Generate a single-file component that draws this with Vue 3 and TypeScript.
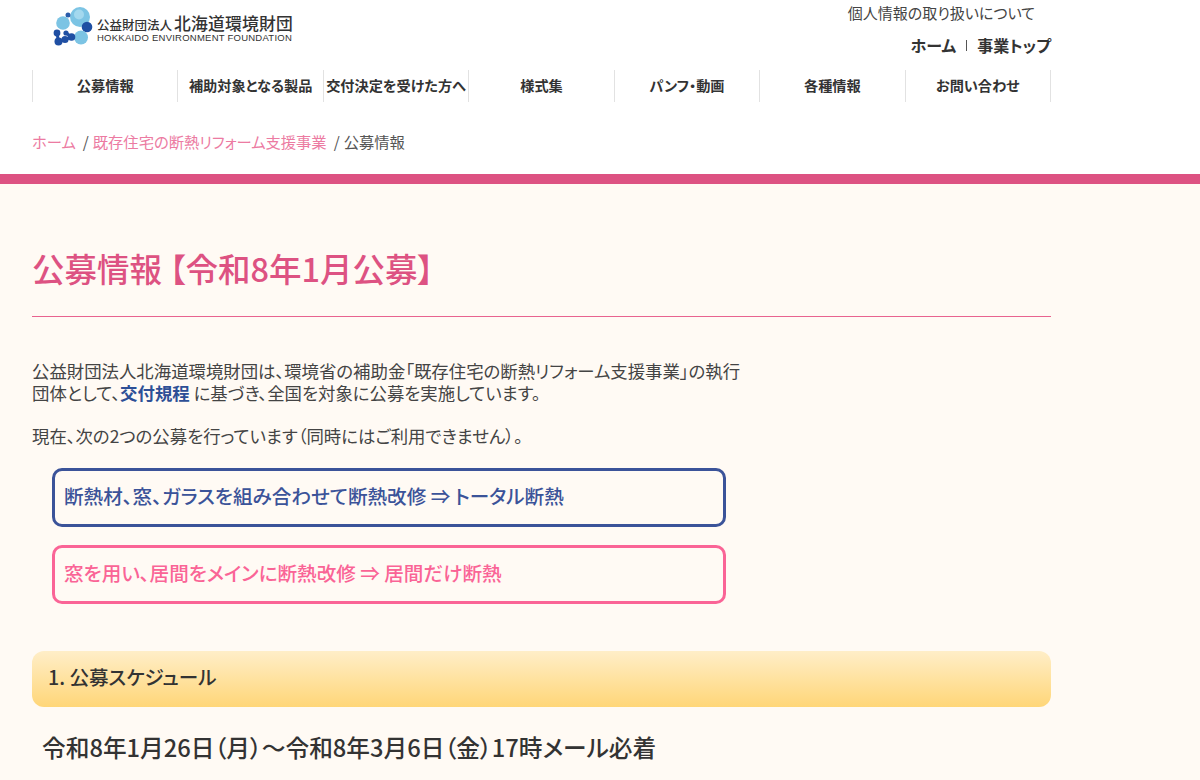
<script setup lang="ts">
const navItems = ["公募情報", "補助対象となる製品", "交付決定を受けた方へ", "様式集", "パンフ・動画", "各種情報", "お問い合わせ"];
</script>

<template>
  <div class="page">
    <header class="header">
      <div class="top">
        <a class="logo">
          <svg class="logo-mark" width="40" height="40" viewBox="0 0 40 40">
            <path d="M4 26 L5.5 34.5 L12 32.5 L18.5 30 L13 26" fill="none" stroke="#1f4fa3" stroke-width="3" />
            <circle cx="27" cy="10" r="10" fill="#7cc4e4" />
            <circle cx="26" cy="7.5" r="5" fill="#a3d8ee" />
            <circle cx="15" cy="8" r="2.5" fill="#2a5caa" />
            <circle cx="10" cy="16" r="6.8" fill="#7cc4e4" />
            <circle cx="34" cy="20" r="5.3" fill="#1f4fa3" />
            <circle cx="28" cy="30.5" r="7" fill="#7cc4e4" />
            <circle cx="4" cy="26" r="3.4" fill="#1f4fa3" />
            <circle cx="5.5" cy="34.5" r="4" fill="#1f4fa3" />
            <circle cx="12" cy="32.5" r="3.6" fill="#1f4fa3" />
            <circle cx="18.5" cy="30" r="3.8" fill="#1f4fa3" />
            <circle cx="13" cy="26" r="2.6" fill="#1f4fa3" />
          </svg>
          <div class="logo-text">
            <div class="logo-ja"><span class="logo-small">公益財団法人</span><span class="logo-big">北海道環境財団</span></div>
            <div class="logo-en">HOKKAIDO ENVIRONMENT FOUNDATION</div>
          </div>
        </a>
        <div class="top-links">
          <a class="privacy">個人情報の取り扱いについて</a>
          <div class="sub-links"><a>ホーム</a><i></i><a>事業トップ</a></div>
        </div>
      </div>
      <nav class="nav">
        <a v-for="item in navItems" :key="item">{{ item }}</a>
      </nav>
      <div class="crumbs">
        <a>ホーム</a><span class="sep">/</span><a>既存住宅の断熱リフォーム支援事業</a><span class="sep">/</span><span>公募情報</span>
      </div>
    </header>

    <main class="main">
      <h1>公募情報 【令和8年1月公募】</h1>
      <div class="lead">
        <p>公益財団法人北海道環境財団は、環境省の補助金「既存住宅の断熱リフォーム支援事業」の執行<br />団体として、<a class="rule-link">交付規程</a> に基づき、全国を対象に公募を実施しています。</p>
        <p>現在、次の2つの公募を行っています（同時にはご利用できません）。</p>
      </div>
      <div class="choices">
        <a class="choice blue">断熱材、窓、ガラスを組み合わせて断熱改修 ⇒ トータル断熱</a>
        <a class="choice pink">窓を用い、居間をメインに断熱改修 ⇒ 居間だけ断熱</a>
      </div>
      <h2>1. 公募スケジュール</h2>
      <p class="period">令和8年1月26日（月）～令和8年3月6日（金）17時メール必着</p>
    </main>
  </div>
</template>

<style>
html, body { margin: 0; background: #fff; }
</style>

<style scoped>
.page {
  height: 780px;
  overflow: hidden;
  font-family: "Noto Sans CJK JP", "Noto Sans", sans-serif;
  font-feature-settings: "palt";
  color: #333;
}
.header { padding: 0 149px 0 32px; height: 174px; border-bottom: 10px solid #dd5282; }
.top { display: flex; justify-content: space-between; height: 70px; }
.logo { display: flex; align-items: flex-start; gap: 4px; padding: 7px 0 0 21px; }
.logo-text { padding-top: 6px; color: #333; }
.logo-ja { display: flex; align-items: baseline; height: 20px; white-space: nowrap; }
.logo-small { font-size: 12.5px; line-height: 20px; font-weight: 500; }
.logo-big { font-size: 16.8px; line-height: 20px; font-weight: 500; margin-left: 2px; letter-spacing: 0.2px; }
.logo-en { font-family: "Liberation Sans", sans-serif; font-size: 9.5px; line-height: 9px; letter-spacing: 0.24px; white-space: nowrap; }
.top-links { display: flex; flex-direction: column; align-items: flex-end; }
.privacy { font-size: 15px; line-height: 20px; margin: 3px 16px 0 0; color: #444; }
.sub-links { display: flex; align-items: center; margin-top: 11px; font-size: 16px; line-height: 22px; font-weight: 700; }
.sub-links i { width: 1px; height: 11px; background: #555; margin: 0 10px; }
.nav { display: grid; grid-template-columns: repeat(7, 1fr); height: 32px; border-right: 1px solid #e2e2e2; }
.nav a {
  display: flex;
  align-items: center;
  justify-content: center;
  padding-bottom: 2px;
  border-left: 1px solid #e2e2e2;
  font-size: 14.2px;
  font-weight: 700;
  white-space: nowrap;
}
.crumbs { display: flex; margin-top: 28px; font-size: 15.3px; line-height: 22px; color: #555; }
.crumbs a { color: #ec7ba2; }
.sep { margin: 0 4px 0 7px; }
.main { background: #fffaf4; height: 596px; padding: 64px 149px 0 32px; overflow: hidden; }
h1 {
  margin: 0;
  height: 68px;
  border-bottom: 1px solid #e8638f;
  font-size: 32.5px;
  line-height: 39px;
  font-weight: 500;
  color: #dd5282;
}
.lead { margin-top: 43px; font-size: 17.4px; line-height: 22px; color: #444; }
.lead p { margin: 0 0 21px; white-space: nowrap; }
.rule-link { color: #2d4f96; font-weight: 700; }
.choices { display: flex; flex-direction: column; gap: 18px; margin: 0 0 0 20px; width: 674px; }
.choice {
  box-sizing: border-box;
  height: 59px;
  display: flex;
  align-items: center;
  padding: 0 9px 4px;
  border: 3px solid;
  border-radius: 10px;
  font-size: 19.6px;
  font-weight: 500;
}
.blue { border-color: #3b5399; color: #3b5399; }
.pink { border-color: #fa6496; color: #fa6496; }
h2 {
  box-sizing: border-box;
  margin: 47px 0 0;
  height: 56px;
  display: flex;
  align-items: center;
  padding: 0 0 5px 16px;
  border-radius: 12px;
  background: linear-gradient(#ffeec8, #ffd678);
  font-size: 19.6px;
  font-weight: 500;
  color: #333;
}
.period { margin: 22px 0 0 10px; font-size: 23.7px; line-height: 36px; font-weight: 500; color: #333; white-space: nowrap; }
</style>
